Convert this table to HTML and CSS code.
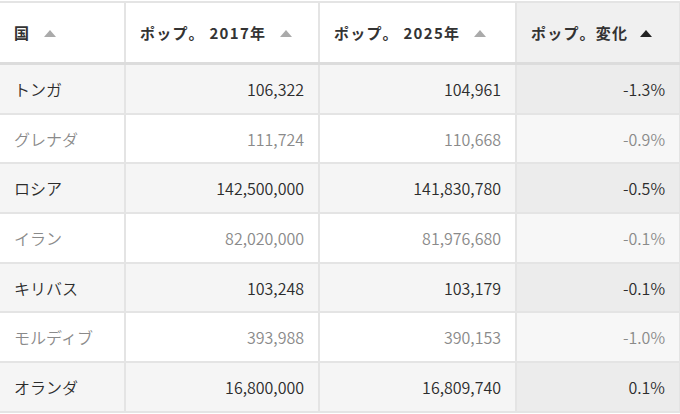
FILE: index.html
```html
<!DOCTYPE html>
<html lang="ja">
<head>
<meta charset="utf-8">
<link rel="stylesheet" href="styles.css">
</head>
<body>
<table class="grid">
  <colgroup>
    <col class="c1"><col class="c2"><col class="c3"><col class="c4">
  </colgroup>
  <thead>
    <tr>
      <th class="left">国<span class="tri"></span></th>
      <th>ポップ。 2017年<span class="tri"></span></th>
      <th>ポップ。 2025年<span class="tri"></span></th>
      <th class="sorted">ポップ。変化<span class="tri dark"></span></th>
    </tr>
  </thead>
  <tbody>
    <tr class="odd"><td class="left">トンガ</td><td>106,322</td><td>104,961</td><td class="sorted">-1.3%</td></tr>
    <tr class="even"><td class="left">グレナダ</td><td>111,724</td><td>110,668</td><td class="sorted">-0.9%</td></tr>
    <tr class="odd"><td class="left">ロシア</td><td>142,500,000</td><td>141,830,780</td><td class="sorted">-0.5%</td></tr>
    <tr class="even"><td class="left">イラン</td><td>82,020,000</td><td>81,976,680</td><td class="sorted">-0.1%</td></tr>
    <tr class="odd"><td class="left">キリバス</td><td>103,248</td><td>103,179</td><td class="sorted">-0.1%</td></tr>
    <tr class="even"><td class="left">モルディブ</td><td>393,988</td><td>390,153</td><td class="sorted">-1.0%</td></tr>
    <tr class="odd"><td class="left">オランダ</td><td>16,800,000</td><td>16,809,740</td><td class="sorted">0.1%</td></tr>
  </tbody>
</table>
</body>
</html>
```

FILE: styles.css
```css
html, body {
  margin: 0;
  padding: 0;
  background: #ffffff;
}
body {
  padding-top: 1px;
  font-family: "Noto Sans CJK JP", "Noto Sans", sans-serif;
  overflow: hidden;
}
.grid {
  border-collapse: collapse;
  table-layout: fixed;
  width: 680px;
}
.c1 { width: 125px; }
.c2 { width: 194px; }
.c3 { width: 197px; }
.c4 { width: 164px; }
.grid th, .grid td {
  border: 2px solid #e4e4e4;
  padding: 0 14px 0 13px;
  text-align: right;
  white-space: nowrap;
}
.grid th:first-child, .grid td:first-child { border-left: 0; }
.grid th {
  height: 59px;
  font-size: 15px;
  font-weight: 700;
  color: #333333;
  letter-spacing: 1.3px;
  background: #ffffff;
  text-align: left;
  padding-left: 14px;
  border-bottom: 3px solid #dcdcdc;
}
.grid th.sorted { background: #f0f0f0; }
.grid td {
  height: 47.7px;
  font-size: 16px;
  font-weight: 350;
}
.grid .left { text-align: left; padding-left: 14px; }
.tri {
  display: inline-block;
  width: 0;
  height: 0;
  margin-left: 14px;
  vertical-align: 2px;
  border-left: 6px solid transparent;
  border-right: 6px solid transparent;
  border-bottom: 7px solid #aaaaaa;
}
.tri.dark { border-bottom-color: #222222; margin-left: 12px; }
.odd td { background: #f5f5f5; color: #2c2c2c; }
.odd td.sorted { background: #ececec; }
.even td { background: #ffffff; color: #8a8a8a; }
.even td.sorted { background: #f7f7f7; }
```
